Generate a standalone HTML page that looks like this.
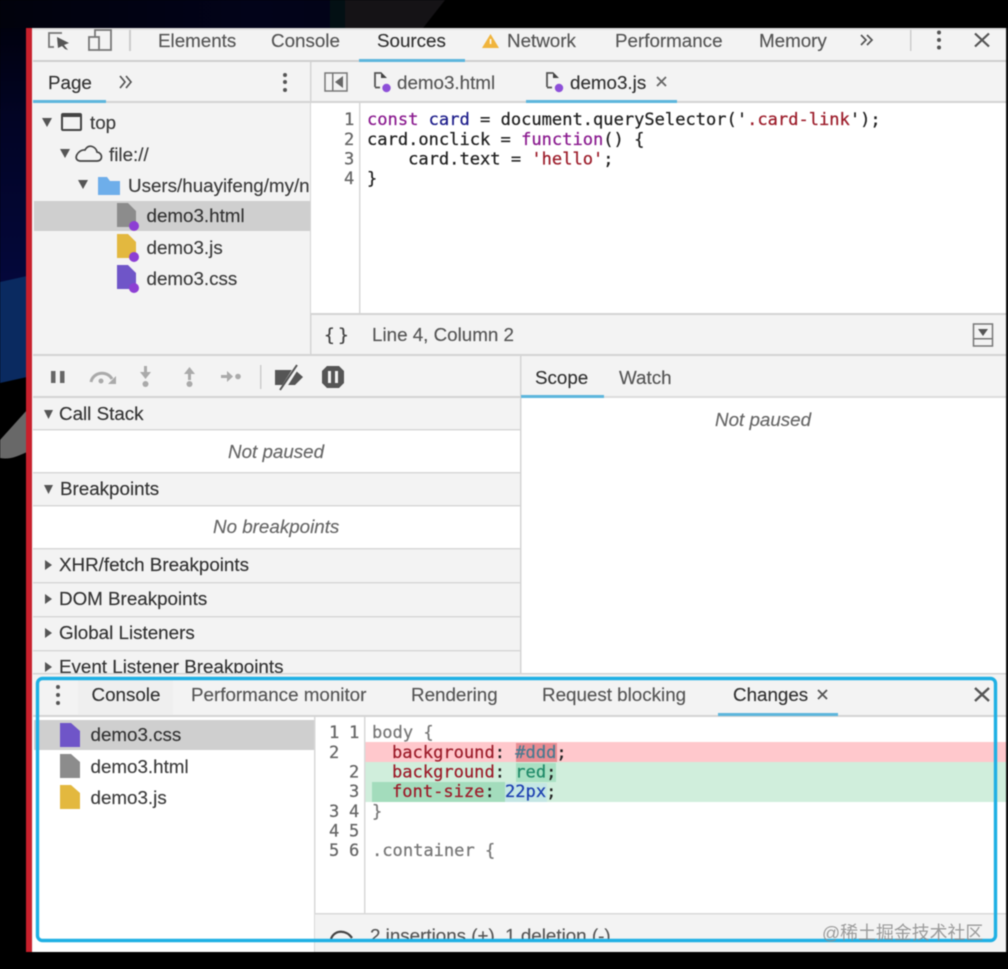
<!DOCTYPE html>
<html><head><meta charset="utf-8"><style>
html,body{margin:0;padding:0;background:#000;width:1008px;height:969px;overflow:hidden}
svg{display:block;filter:blur(.5px)}
text{font-family:"Liberation Sans","Noto Sans CJK SC",sans-serif;font-size:18.8px;fill:#3c3c3c;stroke:#3c3c3c;stroke-width:.15px;white-space:pre}
.d{fill:#555;stroke:#555}
.m{font-family:"DejaVu Sans Mono","Liberation Mono",monospace;font-size:17.07px;fill:#222;stroke:#222;stroke-width:.25px}
.k{fill:#8a1a8f;stroke:#8a1a8f}.v{fill:#1c1c8a;stroke:#1c1c8a}.s{fill:#9c1c2a;stroke:#9c1c2a}.g{fill:#777;stroke:#777}.n{fill:#666;stroke:#666}
.i{font-style:italic;fill:#666;stroke:#666}
.l{fill:#333;stroke:#333}
</style></head><body>
<svg width="1008" height="969" viewBox="0 0 1008 969" xmlns="http://www.w3.org/2000/svg">
<defs>
<clipPath id="c1"><rect x="33" y="103" width="277" height="250"/></clipPath>
<clipPath id="c2"><rect x="33" y="651" width="487" height="22"/></clipPath>
<clipPath id="c3"><rect x="315" y="915" width="690" height="26"/></clipPath>
<linearGradient id="bg" x1="0" y1="0" x2="0" y2="1"><stop offset="0" stop-color="#000008"/><stop offset=".4" stop-color="#020424"/><stop offset="1" stop-color="#04083c"/></linearGradient>
<linearGradient id="tp" x1="0" y1="0" x2="1" y2="0"><stop offset="0" stop-color="#01020c"/><stop offset=".8" stop-color="#02031a"/><stop offset="1" stop-color="#020318"/></linearGradient>
</defs>
<rect width="1008" height="969" fill="#000"/>
<rect x="0" y="0" width="27" height="290" fill="url(#bg)"/>
<rect x="0" y="0" width="330" height="28" fill="url(#tp)"/>
<path d="M330 0H345V28H330Z" fill="#031014"/>
<path d="M345 0H445L423 28H345Z" fill="#151316"/>
<path d="M0 282L27 276V377L0 383Z" fill="#0a2a60"/>
<path d="M27 410L0 440V458C10 460 18 456 27 452Z" fill="#686868"/>
<rect x="27" y="28" width="979" height="924" fill="#f3f3f3"/>
<rect x="26" y="28" width="6" height="924" fill="#c8202c"/>
<rect x="32" y="28" width="974" height="2" fill="#e0e0e0"/>

<!-- top toolbar -->
<rect x="33" y="60" width="973" height="2" fill="#cfcfcf"/>
<rect x="359" y="59" width="106" height="3" fill="#5db6dc"/>
<g fill="none" stroke="#777" stroke-width="1.8">
<path d="M62 33H49V47H54"/>
<rect x="89" y="37" width="10" height="13"/>
<path d="M95 37V30H111V50H99"/>
</g>
<path d="M57 37L69 43L64 45L68 50L65 49L62 46L58 48Z" fill="#555"/>
<rect x="129" y="30" width="2" height="21" fill="#ccc"/>
<text x="158" y="47" class="d">Elements</text>
<text x="271" y="47" class="d">Console</text>
<text x="377" y="47" class="l">Sources</text>
<path d="M490.500 34L499 48H482Z" fill="#f0b43c"/>
<rect x="489.800" y="39" width="1.500" height="5" fill="#fff"/>
<text x="507" y="47" class="d">Network</text>
<text x="615" y="47" class="d">Performance</text>
<text x="759" y="47" class="d">Memory</text>
<path d="M861 35L866 40L861 45M867 35L872 40L867 45" fill="none" stroke="#555" stroke-width="1.700"/>
<rect x="910" y="30" width="1.500" height="21" fill="#ccc"/>
<g fill="#555"><circle cx="939" cy="32.500" r="2"/><circle cx="939" cy="40" r="2"/><circle cx="939" cy="47.500" r="2"/></g>
<path d="M975 33.500L989 46.500M989 33.500L975 46.500" stroke="#555" stroke-width="2.200" fill="none"/>

<!-- second row -->
<rect x="33" y="101" width="973" height="2" fill="#d4d4d4"/>
<rect x="33" y="100" width="73" height="3" fill="#5db6dc"/>
<rect x="310" y="62" width="1.500" height="292" fill="#d4d4d4"/>
<text x="48" y="89" class="l">Page</text>
<path d="M120 76L125 82L120 88M126 76L131 82L126 88" fill="none" stroke="#555" stroke-width="1.700"/>
<g fill="#555"><circle cx="285" cy="75" r="2"/><circle cx="285" cy="82" r="2"/><circle cx="285" cy="90" r="2"/></g>
<rect x="325" y="73" width="22" height="18" fill="none" stroke="#777" stroke-width="1.500"/>
<rect x="332" y="73" width="1.500" height="18" fill="#777"/>
<path d="M343 76V88L335 82Z" fill="#666"/>
<path d="M375 87V73H381" fill="none" stroke="#555" stroke-width="1.800"/><path d="M375 87.500H380" fill="none" stroke="#555" stroke-width="1.800"/>
<path d="M381 72L387 78H381Z" fill="#444"/>
<circle cx="386.500" cy="88" r="4.200" fill="#8d4fd8"/>
<text x="397" y="89" class="d">demo3.html</text>
<path d="M547 87V73H553" fill="none" stroke="#555" stroke-width="1.800"/><path d="M547 87.500H552" fill="none" stroke="#555" stroke-width="1.800"/>
<path d="M553 72L559 78H553Z" fill="#444"/>
<circle cx="559" cy="88" r="4.200" fill="#8d4fd8"/>
<text x="570" y="89" class="l">demo3.js</text>
<path d="M657 77L666 86M666 77L657 86" stroke="#666" stroke-width="1.800"/>
<rect x="526" y="100" width="151" height="3" fill="#5db6dc"/>

<!-- tree -->
<rect x="34" y="201" width="276" height="30" fill="#cfcfcf"/>
<g clip-path="url(#c1)">
<path d="M42 118H52L47 127Z" fill="#555"/>
<rect x="62" y="114" width="19" height="16" rx="1" fill="none" stroke="#444" stroke-width="2"/>
<rect x="62" y="114" width="19" height="3" fill="#444"/>
<text x="90" y="129">top</text>
<path d="M60 149H70L65 158Z" fill="#555"/>
<path d="M80 161H97C103 161 103 153 97 152C96 147 89 143 85 150C78 149 72 160 80 161Z" fill="none" stroke="#444" stroke-width="1.700"/>
<text x="109" y="161">file://</text>
<path d="M78 180H88L83 189Z" fill="#555"/>
<path d="M98 177H107L110 181H120V195H98Z" fill="#6eaeea"/>
<text x="128" y="192">Users/huayifeng/my/n</text>
<path d="M117 203H128L136 211V227H117Z" fill="#8c8c8c"/>
<circle cx="134" cy="226" r="5" fill="#8d3fd4"/>
<text x="146.500" y="222" class="l">demo3.html</text>
<path d="M117 234H128L136 242V258H117Z" fill="#e3b83f"/>
<circle cx="134" cy="257" r="5" fill="#8d3fd4"/>
<text x="146.500" y="254">demo3.js</text>
<path d="M117 265H128L136 273V289H117Z" fill="#6f55c8"/>
<circle cx="134" cy="288" r="5" fill="#8d3fd4"/>
<text x="146.500" y="285">demo3.css</text>
</g>

<!-- editor -->
<rect x="311" y="103" width="695" height="210" fill="#fff"/>
<rect x="359" y="103" width="1.500" height="210" fill="#d9d9d9"/>
<g>
<text x="344" y="125" class="m n">1</text>
<text x="344" y="145" class="m n">2</text>
<text x="344" y="164.500" class="m n">3</text>
<text x="344" y="184" class="m n">4</text>
<text x="367" y="125" class="m"><tspan class="k">const</tspan> <tspan class="v">card</tspan> = document.querySelector('<tspan class="s">.card-link</tspan>');</text>
<text x="367" y="145" class="m">card.onclick = <tspan class="k">function</tspan>() {</text>
<text x="367" y="164.500" class="m">    card.text = <tspan class="s">'hello'</tspan>;</text>
<text x="367" y="184" class="m">}</text>
</g>
<rect x="311" y="313" width="695" height="2" fill="#d4d4d4"/>
<text x="324" y="341" class="m" style="font-size:18px;fill:#444;stroke:#444">{</text>
<text x="338" y="341" class="m" style="font-size:18px;fill:#444;stroke:#444">}</text>
<text x="372" y="341" class="d">Line 4, Column 2</text>
<rect x="973.500" y="324" width="19" height="22" fill="none" stroke="#777" stroke-width="1.500"/>
<rect x="974" y="338" width="18" height="1.500" fill="#777"/>
<path d="M978 329H988L983 336Z" fill="#555"/>
<rect x="33" y="354" width="973" height="2" fill="#d4d4d4"/>

<!-- debugger toolbar -->
<rect x="33" y="396" width="487" height="2" fill="#d4d4d4"/>
<g fill="#666"><rect x="51" y="371" width="4.500" height="12"/><rect x="60" y="371" width="4.500" height="12"/></g>
<path d="M91 382C93 372 107 370 112 379" fill="none" stroke="#aaa" stroke-width="3"/>
<path d="M116 376V384H108Z" fill="#aaa"/><circle cx="101" cy="381" r="2.500" fill="#aaa"/>
<g fill="#aaa">
<rect x="144" y="366" width="3" height="10"/><path d="M140 372H151L145.500 379Z"/><circle cx="145.500" cy="384" r="3"/>
<rect x="188" y="371" width="3" height="9"/><path d="M184 374H195L189.500 367Z"/><circle cx="189.500" cy="384" r="3"/>
<rect x="221" y="375" width="9" height="3"/><path d="M227 371V382L233 376.500Z"/><circle cx="238" cy="376.500" r="2.800"/>
</g>
<rect x="260" y="365" width="1.500" height="24" fill="#ccc"/>
<path d="M275 370H295L303 377L295 385H275Z" fill="#555"/>
<path d="M298 365L282 390" stroke="#f3f3f3" stroke-width="5"/>
<path d="M297 365L280 390" stroke="#555" stroke-width="2"/>
<path d="M327 366H339L344 371V383L339 388H327L322 383V371Z" fill="#555"/>
<rect x="328" y="371" width="3" height="12" fill="#f3f3f3"/><rect x="335" y="371" width="3" height="12" fill="#f3f3f3"/>

<!-- right debugger pane -->
<rect x="521" y="398" width="485" height="275" fill="#fff"/>
<rect x="520" y="356" width="1.500" height="317" fill="#d4d4d4"/>
<rect x="521" y="396" width="485" height="2" fill="#dcdcdc"/>
<rect x="521" y="395" width="83" height="3" fill="#5db6dc"/>
<text x="535" y="384" class="l">Scope</text>
<text x="619" y="384" class="d">Watch</text>
<text x="715" y="426" class="i">Not paused</text>

<!-- sections -->
<g fill="#fff"><rect x="33" y="430" width="487" height="42"/><rect x="33" y="506" width="487" height="42"/></g>
<g fill="#d8d8d8"><rect x="33" y="429" width="487" height="1.500"/><rect x="33" y="472" width="487" height="1.500"/><rect x="33" y="505" width="487" height="1.500"/><rect x="33" y="548" width="487" height="1.500"/><rect x="33" y="582" width="487" height="1.500"/><rect x="33" y="616" width="487" height="1.500"/><rect x="33" y="650" width="487" height="1.500"/></g>
<path d="M44 410H53L48.500 419Z" fill="#555"/>
<text x="59" y="420" class="l">Call Stack</text>
<text x="228" y="458" class="i">Not paused</text>
<path d="M44 485H53L48.500 494Z" fill="#555"/>
<text x="60" y="495" class="l">Breakpoints</text>
<text x="213" y="533" class="i">No breakpoints</text>
<path d="M45 560L52 565L45 570Z" fill="#555"/>
<text x="59" y="571" class="l">XHR/fetch Breakpoints</text>
<path d="M45 594L52 599L45 604Z" fill="#555"/>
<text x="59" y="605" class="l">DOM Breakpoints</text>
<path d="M45 628L52 633L45 638Z" fill="#555"/>
<text x="59" y="639" class="l">Global Listeners</text>
<path d="M45 662L52 667L45 672Z" fill="#555"/>
<g clip-path="url(#c2)"><text x="59" y="673" class="l">Event Listener Breakpoints</text></g>

<!-- drawer -->
<rect x="33" y="673" width="973" height="44" fill="#f3f3f3"/>
<rect x="33" y="673" width="973" height="1.500" fill="#d4d4d4"/>
<rect x="33" y="715" width="973" height="2" fill="#d4d4d4"/>
<g fill="#555"><circle cx="58" cy="687" r="2"/><circle cx="58" cy="695" r="2"/><circle cx="58" cy="703" r="2"/></g>
<rect x="78" y="680" width="95" height="35" fill="#efefef"/>
<text x="91.500" y="701" class="l">Console</text>
<text x="191" y="701" class="d">Performance monitor</text>
<text x="411" y="701" class="d">Rendering</text>
<text x="542" y="701" class="d">Request blocking</text>
<text x="733" y="701" class="l">Changes</text>
<path d="M818 690L827 699M827 690L818 699" stroke="#555" stroke-width="1.800"/>
<rect x="718" y="713" width="120" height="3" fill="#5db6dc"/>
<path d="M975 688L989 701M989 688L975 701" stroke="#555" stroke-width="2.400"/>

<rect x="33" y="717" width="973" height="235" fill="#fff"/>
<rect x="34" y="720" width="280" height="30" fill="#cfcfcf"/>
<rect x="314" y="717" width="1.500" height="235" fill="#d9d9d9"/>
<path d="M60 723H71L80 731V747H60Z" fill="#6f55c8"/>
<text x="90.500" y="741" class="l">demo3.css</text>
<path d="M60 754H71L80 762V778H60Z" fill="#8c8c8c"/>
<text x="90.500" y="773">demo3.html</text>
<path d="M60 785H71L80 793V809H60Z" fill="#e3b83f"/>
<text x="90.500" y="804">demo3.js</text>

<rect x="365" y="742" width="641" height="20" fill="#ffc8cc"/>
<rect x="365" y="762" width="641" height="40" fill="#d0eedc"/>
<rect x="372" y="782" width="133" height="20" fill="#a3dcbc"/>
<rect x="505" y="783" width="42" height="19" fill="#c4e6e4"/>
<rect x="516" y="743" width="41" height="19" fill="#e98d93"/>
<rect x="516" y="763" width="40" height="19" fill="#a9e0c3"/>
<rect x="364" y="717" width="1.500" height="196" fill="#d9d9d9"/>
<g>
<text x="329" y="738" class="m n">1</text><text x="349" y="738" class="m n">1</text>
<text x="329" y="758" class="m n">2</text>
<text x="349" y="777.500" class="m n">2</text>
<text x="349" y="797" class="m n">3</text>
<text x="329" y="817" class="m n">3</text><text x="349" y="817" class="m n">4</text>
<text x="329" y="836.500" class="m n">4</text><text x="349" y="836.500" class="m n">5</text>
<text x="329" y="856" class="m n">5</text><text x="349" y="856" class="m n">6</text>
<text x="372" y="738" class="m g">body {</text>
<text x="392" y="758" class="m"><tspan class="s">background</tspan>: <tspan style="fill:#4a7a90;stroke:#4a7a90">#ddd</tspan>;</text>
<text x="392" y="777.500" class="m"><tspan class="s">background</tspan>: <tspan style="fill:#1f8a68;stroke:#1f8a68">red</tspan>;</text>
<text x="392" y="797" class="m"><tspan class="s">font-size</tspan>: <tspan style="fill:#1c3fb0;stroke:#1c3fb0">22px</tspan>;</text>
<text x="372" y="817" class="m g">}</text>
<text x="372" y="856" class="m g">.container {</text>
</g>
<rect x="315" y="913" width="691" height="39" fill="#f3f3f3"/>
<rect x="315" y="913" width="691" height="1.500" fill="#d9d9d9"/>
<g clip-path="url(#c3)">
<path d="M331 939C334 930 346 929 352 938" fill="none" stroke="#444" stroke-width="2.200"/>
<text x="370" y="942" class="d">2 insertions (+), 1 deletion (-)</text>
</g>
<rect x="1006" y="28" width="2" height="924" fill="#111"/>
<rect x="37.500" y="678.500" width="958" height="262" rx="5" fill="none" stroke="#1fb0e4" stroke-width="3.400"/>
<text x="822" y="939" style="font-size:17.900px;fill:#8c8c8c;stroke:none;opacity:.85">@稀土掘金技术社区</text>
</svg>
</body></html>
